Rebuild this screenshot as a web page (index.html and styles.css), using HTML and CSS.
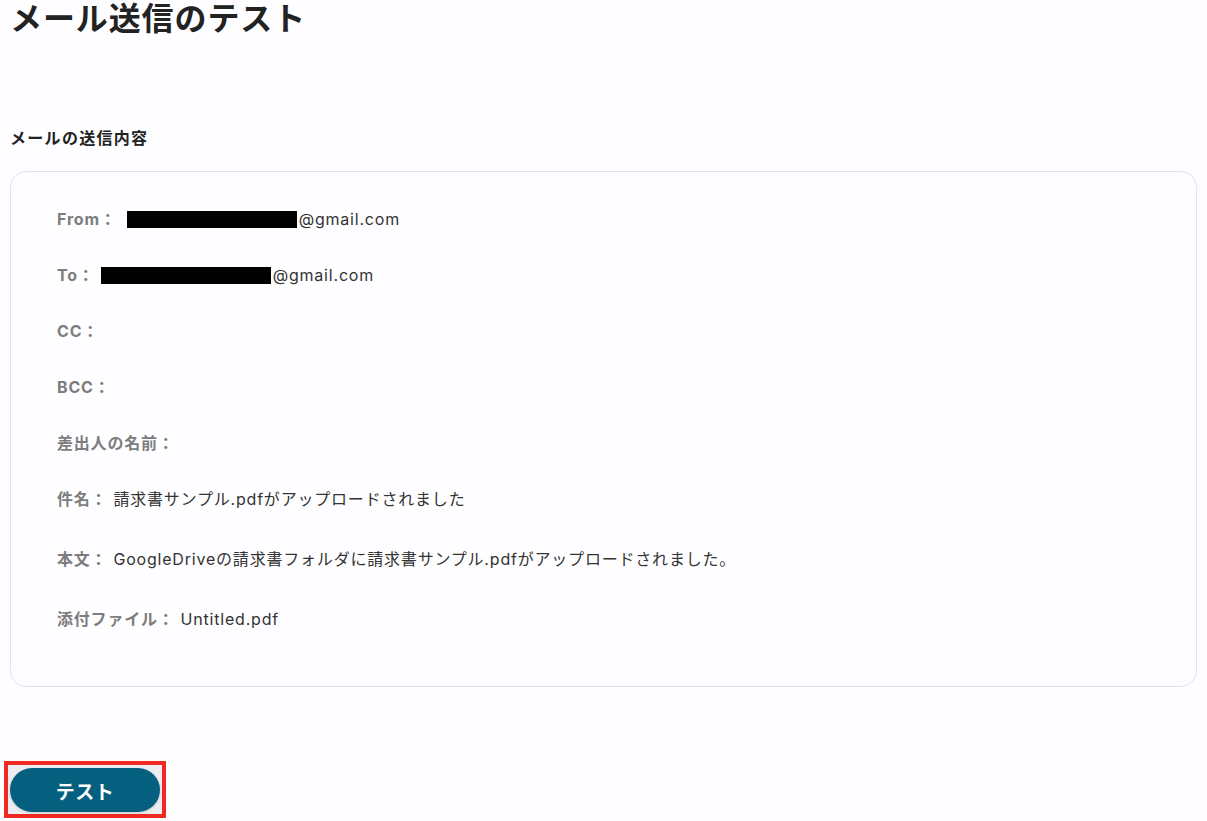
FILE: index.html
```html
<!DOCTYPE html>
<html lang="ja">
<head>
    <meta charset="UTF-8">
    <title>メール送信のテスト</title>
    <link rel="stylesheet" href="styles.css">
</head>
<body>
    <h1>メール送信のテスト</h1>

    <h2>メールの送信内容</h2>

    <div class="card">
        <div class="row">
            <span class="label">From：</span>
            <span class="value"><span class="redact"></span>@gmail.com</span>
        </div>
        <div class="row">
            <span class="label">To：</span>
            <span class="value"><span class="redact"></span>@gmail.com</span>
        </div>
        <div class="row">
            <span class="label">CC：</span>
        </div>
        <div class="row">
            <span class="label">BCC：</span>
        </div>
        <div class="row">
            <span class="label">差出人の名前：</span>
        </div>
        <div class="row">
            <span class="label">件名：</span>
            <span class="value">請求書サンプル.pdfがアップロードされました</span>
        </div>
        <div class="row row-wide">
            <span class="label">本文：</span>
            <span class="value">GoogleDriveの請求書フォルダに請求書サンプル.pdfがアップロードされました。</span>
        </div>
        <div class="row row-wide">
            <span class="label">添付ファイル：</span>
            <span class="value">Untitled.pdf</span>
        </div>
    </div>

    <div class="highlight">
        <button class="test-btn">テスト</button>
    </div>
</body>
</html>
```

FILE: styles.css
```css
body {
    font-family: Inter, 'Noto Sans CJK JP', sans-serif;
    background: #fefdff;
    color: #333333;
    margin: 0;
    padding: 0 10px;
}
h1 {
    font-size: 32px;
    font-weight: 700;
    line-height: 44px;
    letter-spacing: 0.9px;
    margin: -3px 0 0;
    color: #222222;
}
h2 {
    font-size: 16px;
    font-weight: 700;
    line-height: 24px;
    letter-spacing: 1.3px;
    margin: 85px 0 21px;
    color: #222222;
}
.card {
    border: 1px solid #e4e3e6;
    border-radius: 16px;
    padding: 35px 46px 55px;
}
.row {
    display: flex;
    align-items: center;
    font-size: 16px;
    line-height: 24px;
    min-height: 24px;
    letter-spacing: 0.8px;
}
.row + .row {
    margin-top: 32px;
}
.row-wide + .row,
.row + .row-wide {
    margin-top: 36px;
}
.label {
    color: #7d7d7d;
    font-weight: 700;
    margin-right: 6px;
}
.value {
    display: flex;
    align-items: center;
    color: #333333;
}
.redact {
    display: inline-block;
    width: 170px;
    height: 17px;
    margin-right: 2px;
    background: #000000;
}
.row:first-child .redact {
    margin-left: 4px;
}
.highlight {
    display: inline-block;
    margin: 74px 0 0 -6px;
    border: 4px solid #f02a22;
    padding: 3px 2px 2px;
    background: #eeedf2;
}
.test-btn {
    display: block;
    width: 150px;
    height: 44px;
    border: none;
    border-radius: 22px;
    background: #05607f;
    color: #ffffff;
    font-family: 'Noto Sans CJK JP', sans-serif;
    font-size: 19px;
    font-weight: 700;
    letter-spacing: 0.5px;
    box-shadow: 0 1px 3px rgba(0, 0, 0, 0.15);
    cursor: pointer;
}
```
